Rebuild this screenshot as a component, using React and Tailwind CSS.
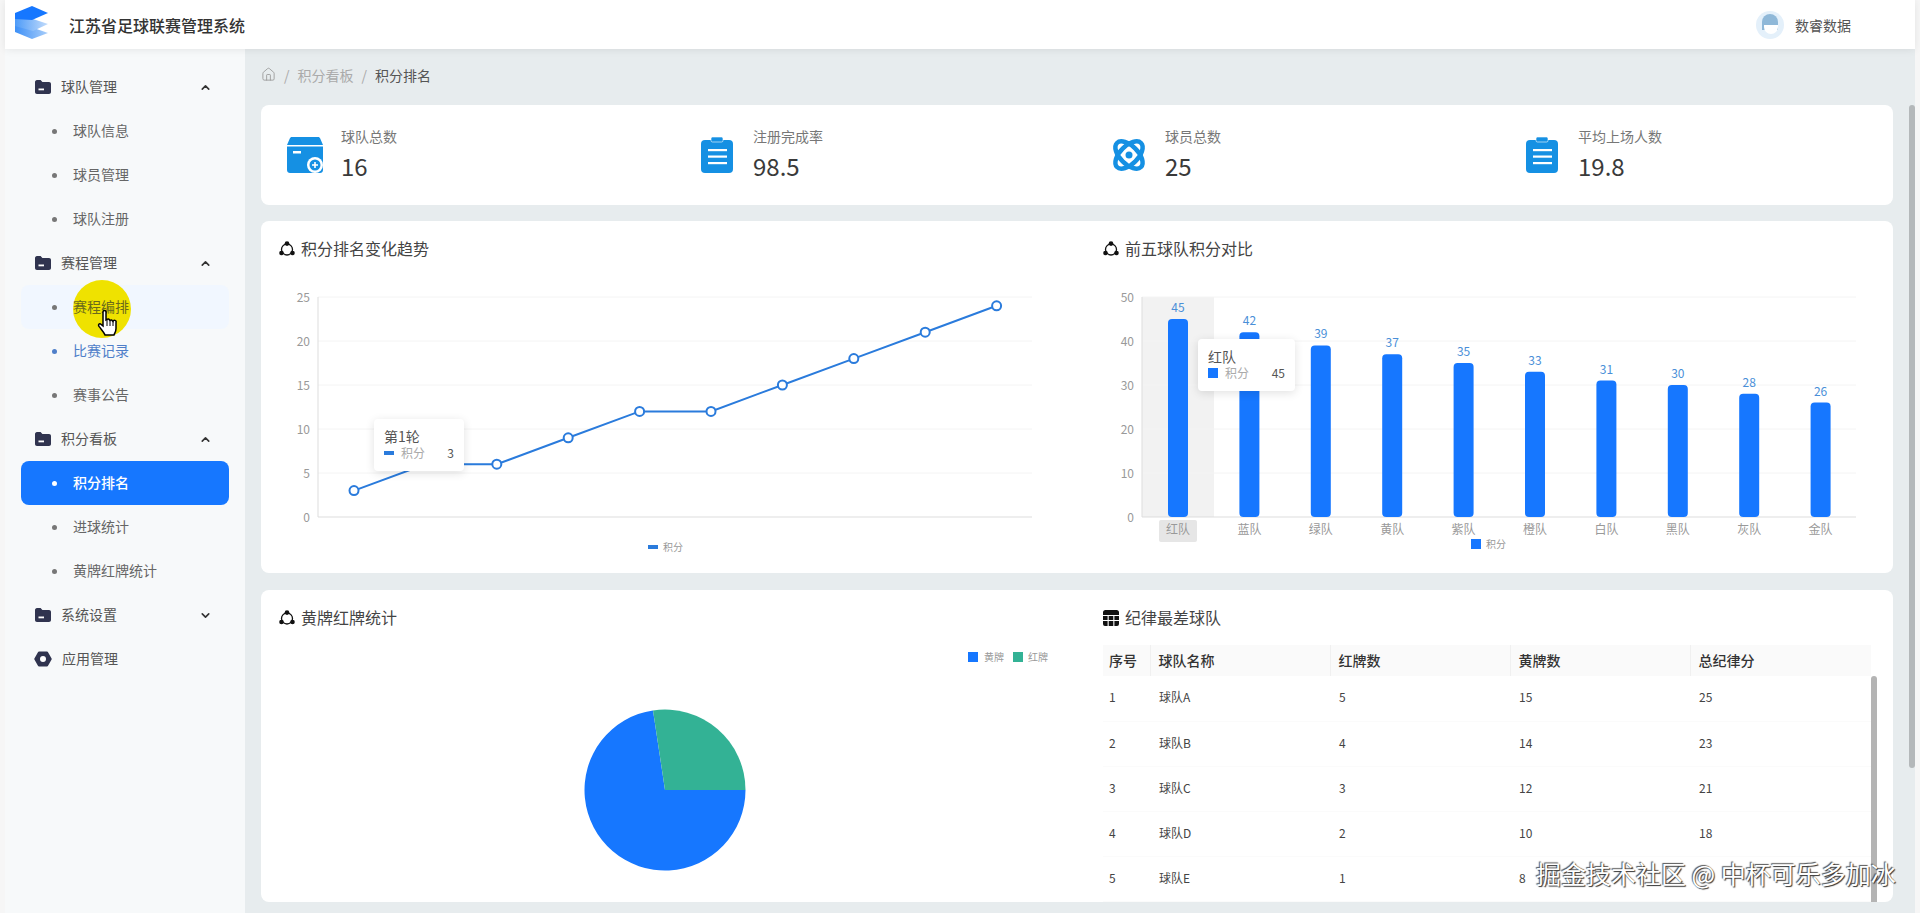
import { ChevronDown, ChevronUp, Home } from 'lucide-react'

const menu = [
  { label: '球队管理', open: true, items: ['球队信息', '球员管理', '球队注册'] },
  { label: '赛程管理', open: true, items: ['赛程编排', '比赛记录', '赛事公告'] },
  { label: '积分看板', open: true, items: ['积分排名', '进球统计', '黄牌红牌统计'] },
  { label: '系统设置', open: false, items: [] },
]

const rounds = [3, 6, 6, 9, 12, 12, 15, 18, 21, 24]
const teams = [
  ['红队', 45], ['蓝队', 42], ['绿队', 39], ['黄队', 37], ['紫队', 35],
  ['橙队', 33], ['白队', 31], ['黑队', 30], ['灰队', 28], ['金队', 26],
]
const discipline = [
  [1, '球队A', 5, 15, 25],
  [2, '球队B', 4, 14, 23],
  [3, '球队C', 3, 12, 21],
  [4, '球队D', 2, 10, 18],
  [5, '球队E', 1, 8, ''],
]

function Logo() {
  return (
    <svg width="50" height="40" viewBox="5 4 50 40">
      <defs>
        <linearGradient id="mid" x1="0" y1="0" x2="1" y2="0">
          <stop offset="0" stopColor="#4d9bf8" />
          <stop offset="1" stopColor="#c3dcfb" />
        </linearGradient>
        <linearGradient id="low" x1="0" y1="0" x2="1" y2="0">
          <stop offset="0" stopColor="#3d90f7" />
          <stop offset="1" stopColor="#a9cefa" />
        </linearGradient>
      </defs>
      <polygon points="15,25 28,25 48,32 32,38 15,31" fill="url(#low)" />
      <polygon points="15,16 30,17 48,23 33,30 15,25" fill="url(#mid)" />
      <polygon points="15,12 32,5 48,12 32,19 15,18" fill="#1677ff" />
    </svg>
  )
}

function FolderIcon() {
  return (
    <svg width="16" height="16" viewBox="0 0 16 16">
      <path d="M0 3.200C0 2 .8 1 2 1h3.600l1.800 2H14c1.200 0 2 .8 2 2v8c0 1.200-.8 2-2 2H2c-1.200 0-2-.8-2-2z" fill="#30344f" />
      <rect x="3.500" y="9.500" width="5.500" height="1.800" fill="#fff" />
    </svg>
  )
}

function HexIcon() {
  return (
    <svg width="18" height="16" viewBox="0 0 18 16">
      <path d="M5 .5h8c.4 0 .7.2.9.5l3.700 6.500c.2.300.2.700 0 1L13.900 15c-.2.300-.5.500-.9.500H5c-.4 0-.7-.2-.9-.5L.4 8.500c-.2-.3-.2-.7 0-1L4.100 1c.2-.3.5-.5.900-.5z" fill="#30344f" />
      <circle cx="9" cy="8" r="3" fill="#fff" />
    </svg>
  )
}

function TitleIcon() {
  return (
    <svg width="16" height="16" viewBox="0 0 16 16" fill="none" className="shrink-0">
      <circle cx="8" cy="8.500" r="5.500" stroke="#111" strokeWidth="1.300" />
      <circle cx="8" cy="2.600" r="2.300" fill="#111" />
      <circle cx="2.500" cy="12" r="2.300" fill="#111" />
      <circle cx="13.500" cy="12" r="2.300" fill="#111" />
    </svg>
  )
}

function TableIcon() {
  return (
    <svg width="16" height="16" viewBox="0 0 16 16" className="shrink-0">
      <path d="M2.500 0h11A2.500 2.500 0 0 1 16 2.500V5H0V2.500A2.500 2.500 0 0 1 2.500 0z" fill="#111" />
      <path d="M0 6h4.600v4H0zM5.700 6h4.600v4H5.700zM11.400 6H16v4h-4.600zM0 11h4.600v5H2a2 2 0 0 1-2-2zM5.700 11h4.600v5H5.700zM11.400 11H16v3a2 2 0 0 1-2 2h-2.600z" fill="#111" />
    </svg>
  )
}

function HandCursor() {
  return (
    <svg width="22" height="28" viewBox="0 0 22 28" className="absolute left-[76px] top-[25px]">
      <path
        d="M6 2a1.500 1.500 0 0 1 3 0v8l1-.6a1.500 1.500 0 0 1 2.500.6l.5.4a1.500 1.500 0 0 1 2.500.6l.5.4a1.500 1.500 0 0 1 3 1v6c0 3-1 4-2 6.500H8c-1-2.500-3-4.500-6-8.500-1-1.500 0-3 1.500-2.500L6 16z"
        fill="#fff"
        stroke="#000"
        strokeWidth="1.500"
      />
      <path d="M10 10v6M13 11v5M16 12v4" stroke="#000" strokeWidth="1" fill="none" />
    </svg>
  )
}

function BoxIcon() {
  return (
    <svg width="36" height="36" viewBox="0 0 36 36">
      <path d="M5 0h26c1 0 1.800.5 2.200 1.500L36 8H0l2.800-6.500C3.200.5 4 0 5 0z" fill="#1590e3" />
      <path d="M0 9.500h36V33c0 1.700-1.300 3-3 3H3c-1.700 0-3-1.300-3-3z" fill="#1590e3" />
      <rect x="6" y="14" width="8" height="2.500" fill="#fff" />
      <circle cx="28" cy="28" r="8" fill="#fff" />
      <circle cx="28" cy="28" r="5.500" fill="#1590e3" />
      <path d="M25 27.200h2.200V25h1.600v2.200H31v1.600h-2.200V31h-1.600v-2.200H25z" fill="#fff" />
    </svg>
  )
}

function ClipboardIcon() {
  return (
    <svg width="36" height="36" viewBox="0 0 36 36">
      <rect x="2" y="3" width="32" height="33" rx="4" fill="#1590e3" />
      <rect x="12" y="0" width="12" height="5" rx="1.500" fill="#1590e3" stroke="#fff" strokeWidth=".6" />
      <rect x="9" y="12" width="19" height="2.200" fill="#fff" />
      <rect x="9" y="18.500" width="19" height="2.200" fill="#fff" />
      <rect x="9" y="25" width="19" height="2.200" fill="#fff" />
    </svg>
  )
}

function OrbitIcon() {
  return (
    <svg width="36" height="36" viewBox="0 0 36 36" fill="none">
      <ellipse cx="18" cy="18" rx="17" ry="9" transform="rotate(45 18 18)" stroke="#1590e3" strokeWidth="4.500" />
      <ellipse cx="18" cy="18" rx="17" ry="9" transform="rotate(-45 18 18)" stroke="#1590e3" strokeWidth="4.500" />
      <rect x="12" y="12" width="12" height="12" transform="rotate(45 18 18)" fill="#fff" />
      <circle cx="18" cy="18" r="3.500" fill="#1590e3" />
    </svg>
  )
}

function Sidebar() {
  return (
    <aside className="w-[240px] shrink-0 bg-[#f7f9fa] px-4 pt-4 text-sm">
      {menu.map((group) => (
        <div key={group.label}>
          <div className="flex h-11 items-center gap-2.5 pl-3.5 pr-[17px] text-[#555]">
            <FolderIcon />
            <span className="flex-1 pb-0.5">{group.label}</span>
            {group.open ? (
              <ChevronUp size={13} strokeWidth={3} color="#333" />
            ) : (
              <ChevronDown size={13} strokeWidth={3} color="#333" />
            )}
          </div>
          {group.items.map((item) => {
            const active = item === '积分排名'
            const hover = item === '赛程编排'
            const link = item === '比赛记录'
            return (
              <div
                key={item}
                className={
                  'relative flex h-11 items-center gap-4 rounded-lg pl-[31px] ' +
                  (active ? 'bg-[#1677ff] font-medium text-white' : hover ? 'bg-[#f1f7ff] text-[#6b6a1c]' : link ? 'text-[#4f7fc9]' : 'text-[#666]')
                }
              >
                <span className={'h-[5px] w-[5px] rounded-full ' + (active ? 'bg-white' : link ? 'bg-[#4f7fc9]' : 'bg-[#777]')}></span>
                {hover && <span className="absolute left-[52px] top-[-5px] h-[58px] w-[58px] rounded-full bg-[#efe200]"></span>}
                <span className="relative pb-0.5">{item}</span>
                {hover && <HandCursor />}
              </div>
            )
          })}
        </div>
      ))}
      <div className="flex h-11 items-center gap-2.5 pl-[13px] text-[#555]">
        <HexIcon />
        <span className="pb-0.5">应用管理</span>
      </div>
    </aside>
  )
}

function Stat({ icon, label, value }) {
  return (
    <div className="flex items-center gap-[18px]">
      {icon}
      <div className="pb-0.5">
        <div className="text-sm leading-5 text-[#777]">{label}</div>
        <div className="mt-1 text-2xl leading-8 text-[#3a3a3a]">{value}</div>
      </div>
    </div>
  )
}

function CardTitle({ icon, children }) {
  return (
    <div className="flex h-6 items-center gap-1.5 text-base text-[#444]">
      {icon}
      <span className="pb-0.5">{children}</span>
    </div>
  )
}

function Grid({ left, right, labels }) {
  const y = (i) => 517 - i * 44
  return (
    <>
      {labels.map((label, i) => (
        <g key={label}>
          {i > 0 && <line x1={left} x2={right} y1={y(i)} y2={y(i)} stroke="#f4f4f4" />}
          <text x={left - 8} y={y(i) + 4.5} textAnchor="end" fontSize="12" fill="#999">{label}</text>
        </g>
      ))}
      <line x1={left} x2={left} y1="297" y2="517" stroke="#ddd" />
      <line x1={left} x2={right} y1="517" y2="517" stroke="#ddd" />
    </>
  )
}

function LineChart() {
  const pts = rounds.map((v, i) => [354 + i * 71.4, 517 - v * 8.8])
  return (
    <div className="relative mt-[19px]">
      <svg width="770" height="290" viewBox="279 280 770 290" className="block">
        <Grid left={318} right={1032} labels={[0, 5, 10, 15, 20, 25]} />
        <polyline points={pts.map((p) => p.join(',')).join(' ')} fill="none" stroke="#2a7bdc" strokeWidth="2" />
        {pts.map((p) => (
          <circle key={p[0]} cx={p[0]} cy={p[1]} r="4.500" fill="#fff" stroke="#2a7bdc" strokeWidth="2" />
        ))}
        <rect x="648" y="545" width="10" height="4" fill="#2a7bdc" />
        <text x="663" y="551" fontSize="10" fill="#999">积分</text>
      </svg>
      <div className="absolute left-[95px] top-[139px] h-[52px] w-[90px] rounded bg-white px-2.5 pt-2 shadow-[0_2px_10px_rgba(0,0,0,0.12)]">
        <div className="text-sm leading-[18px] text-[#555]">第1轮</div>
        <div className="flex items-center text-xs leading-4 text-[#aaa]">
          <span className="mr-[7px] h-1 w-2.5 bg-[#2a7bdc]"></span>
          <span className="flex-1">积分</span>
          <span className="text-[#555]">3</span>
        </div>
      </div>
    </div>
  )
}

function BarChart() {
  return (
    <div className="relative mt-[19px]">
      <svg width="770" height="290" viewBox="1103 280 770 290" className="block">
        <rect x="1142" y="297" width="72" height="220" fill="#f2f2f2" />
        <Grid left={1142} right={1856} labels={[0, 10, 20, 30, 40, 50]} />
        <rect x="1159" y="520" width="38" height="22" rx="2" fill="#e6e6e6" />
        {teams.map(([name, v], i) => {
          const cx = 1178 + i * 71.4
          const top = 517 - v * 4.4
          return (
            <g key={name}>
              <rect x={cx - 10} y={top} width="20" height={v * 4.4} rx="4" fill="#1677ff" />
              <text x={cx} y={top - 7} textAnchor="middle" fontSize="12" fill="#4a8fd8">{v}</text>
              <text x={cx} y="534" textAnchor="middle" fontSize="12" fill="#999">{name}</text>
            </g>
          )
        })}
        <rect x="1471" y="539" width="10" height="10" fill="#1677ff" />
        <text x="1486" y="548" fontSize="10" fill="#999">积分</text>
      </svg>
      <div className="absolute left-[95px] top-[59px] h-[52px] w-[97px] rounded bg-white px-[10px] pt-2 shadow-[0_2px_10px_rgba(0,0,0,0.12)]">
        <div className="text-sm leading-[18px] text-[#555]">红队</div>
        <div className="flex items-center text-xs leading-4 text-[#aaa]">
          <span className="mr-[7px] h-2.5 w-2.5 bg-[#1677ff]"></span>
          <span className="flex-1">积分</span>
          <span className="text-[#555]">45</span>
        </div>
      </div>
    </div>
  )
}

function PieChart() {
  return (
    <svg width="800" height="262" viewBox="279 640 800 262" className="mt-2.5 block">
      <path d="M665 790 L745.500 790 A80.500 80.500 0 1 1 653 710.400 Z" fill="#1677ff" />
      <path d="M665 790 L653 710.400 A80.500 80.500 0 0 1 745.500 790 Z" fill="#33b295" />
      <rect x="968" y="652" width="10" height="10" fill="#1677ff" />
      <text x="984" y="661" fontSize="10" fill="#999">黄牌</text>
      <rect x="1013" y="652" width="10" height="10" fill="#33b295" />
      <text x="1028" y="661" fontSize="10" fill="#999">红牌</text>
    </svg>
  )
}

function DisciplineTable() {
  return (
    <div className="relative mt-[15px] w-[774px]">
      <table className="w-[768px] table-fixed border-collapse">
        <colgroup>
          <col className="w-[47px]" />
          <col className="w-[180px]" />
          <col className="w-[180px]" />
          <col className="w-[180px]" />
          <col className="w-[181px]" />
        </colgroup>
        <thead>
          <tr className="h-[31px] bg-[#fafafa] text-left text-sm text-[#333]">
            {['序号', '球队名称', '红牌数', '黄牌数', '总纪律分'].map((h, i) => (
              <th key={h} className={'pb-0.5 font-medium ' + (i === 0 ? 'pl-1.5' : 'border-l border-[#f0f0f0] pl-2')}>{h}</th>
            ))}
          </tr>
        </thead>
        <tbody>
          {discipline.map((row) => (
            <tr key={row[0]} className="h-[45px] border-b border-[#fbfbfb] text-xs text-[#444]">
              {row.map((cell, i) => (
                <td key={i} className={'pb-0.5 ' + (i === 0 ? 'pl-1.5' : 'pl-[9px]')}>{cell}</td>
              ))}
            </tr>
          ))}
        </tbody>
      </table>
      <div className="absolute left-[768px] top-[31px] h-[260px] w-1.5 rounded-t bg-[#b4b4b4]"></div>
    </div>
  )
}

export default function App() {
  return (
    <div className="h-[913px] overflow-hidden bg-[#f6f6f6] pl-[5px] pr-[5px] font-['Noto_Sans_CJK_SC',sans-serif]">
      <header className="relative z-10 flex h-[49px] items-center bg-white shadow-[0_1px_8px_rgba(0,0,0,0.08)]">
        <Logo />
        <span className="ml-[14px] flex-1 text-base font-medium text-[#333]">江苏省足球联赛管理系统</span>
        <div className="mr-[64px] flex items-center gap-[11px] text-sm text-[#555]">
          <div className="relative h-7 w-7 overflow-hidden rounded-full bg-[#e4f0fa]">
            <span className="absolute left-[6px] top-[3px] h-[16px] w-[16px] rounded-t-full bg-[#8fb8d8]"></span>
            <span className="absolute left-[8px] top-[14px] h-[9px] w-[14px] rounded-b-full bg-white"></span>
          </div>
          <span>数睿数据</span>
        </div>
      </header>

      <div className="flex h-[864px]">
        <Sidebar />
        <main className="relative flex-1 overflow-hidden bg-[#e7ecee] pl-4 pr-[22px]">
          <div className="flex h-[56px] items-center gap-2 pb-[5px] text-sm text-[#aaa]">
            <Home size={15} strokeWidth={1.4} color="#999" />
            <span>/</span>
            <span>积分看板</span>
            <span>/</span>
            <span className="text-[#555]">积分排名</span>
          </div>

          <section className="grid h-[100px] grid-cols-[412px_412px_413px_1fr] items-center rounded-lg bg-white pl-[26px]">
            <Stat icon={<BoxIcon />} label="球队总数" value="16" />
            <Stat icon={<ClipboardIcon />} label="注册完成率" value="98.5" />
            <Stat icon={<OrbitIcon />} label="球员总数" value="25" />
            <Stat icon={<ClipboardIcon />} label="平均上场人数" value="19.8" />
          </section>

          <section className="mt-4 grid h-[352px] grid-cols-[824px_1fr] rounded-lg bg-white px-[18px] pt-4">
            <div>
              <CardTitle icon={<TitleIcon />}>积分排名变化趋势</CardTitle>
              <LineChart />
            </div>
            <div>
              <CardTitle icon={<TitleIcon />}>前五球队积分对比</CardTitle>
              <BarChart />
            </div>
          </section>

          <section className="mt-[17px] grid h-[312px] grid-cols-[824px_1fr] overflow-hidden rounded-lg bg-white px-[18px] pt-4">
            <div>
              <CardTitle icon={<TitleIcon />}>黄牌红牌统计</CardTitle>
              <PieChart />
            </div>
            <div>
              <CardTitle icon={<TableIcon />}>纪律最差球队</CardTitle>
              <DisciplineTable />
            </div>
          </section>

          <div className="absolute right-0 top-[56px] h-[663px] w-1.5 rounded-full bg-[#b4b8ba]"></div>
          <div className="absolute left-[1291px] top-[808px] whitespace-nowrap text-[25px] leading-8 text-white [text-shadow:1px_1px_1px_#333,-1px_-1px_1px_#555]">
            掘金技术社区 @ 中杯可乐多加冰
          </div>
        </main>
      </div>
    </div>
  )
}
